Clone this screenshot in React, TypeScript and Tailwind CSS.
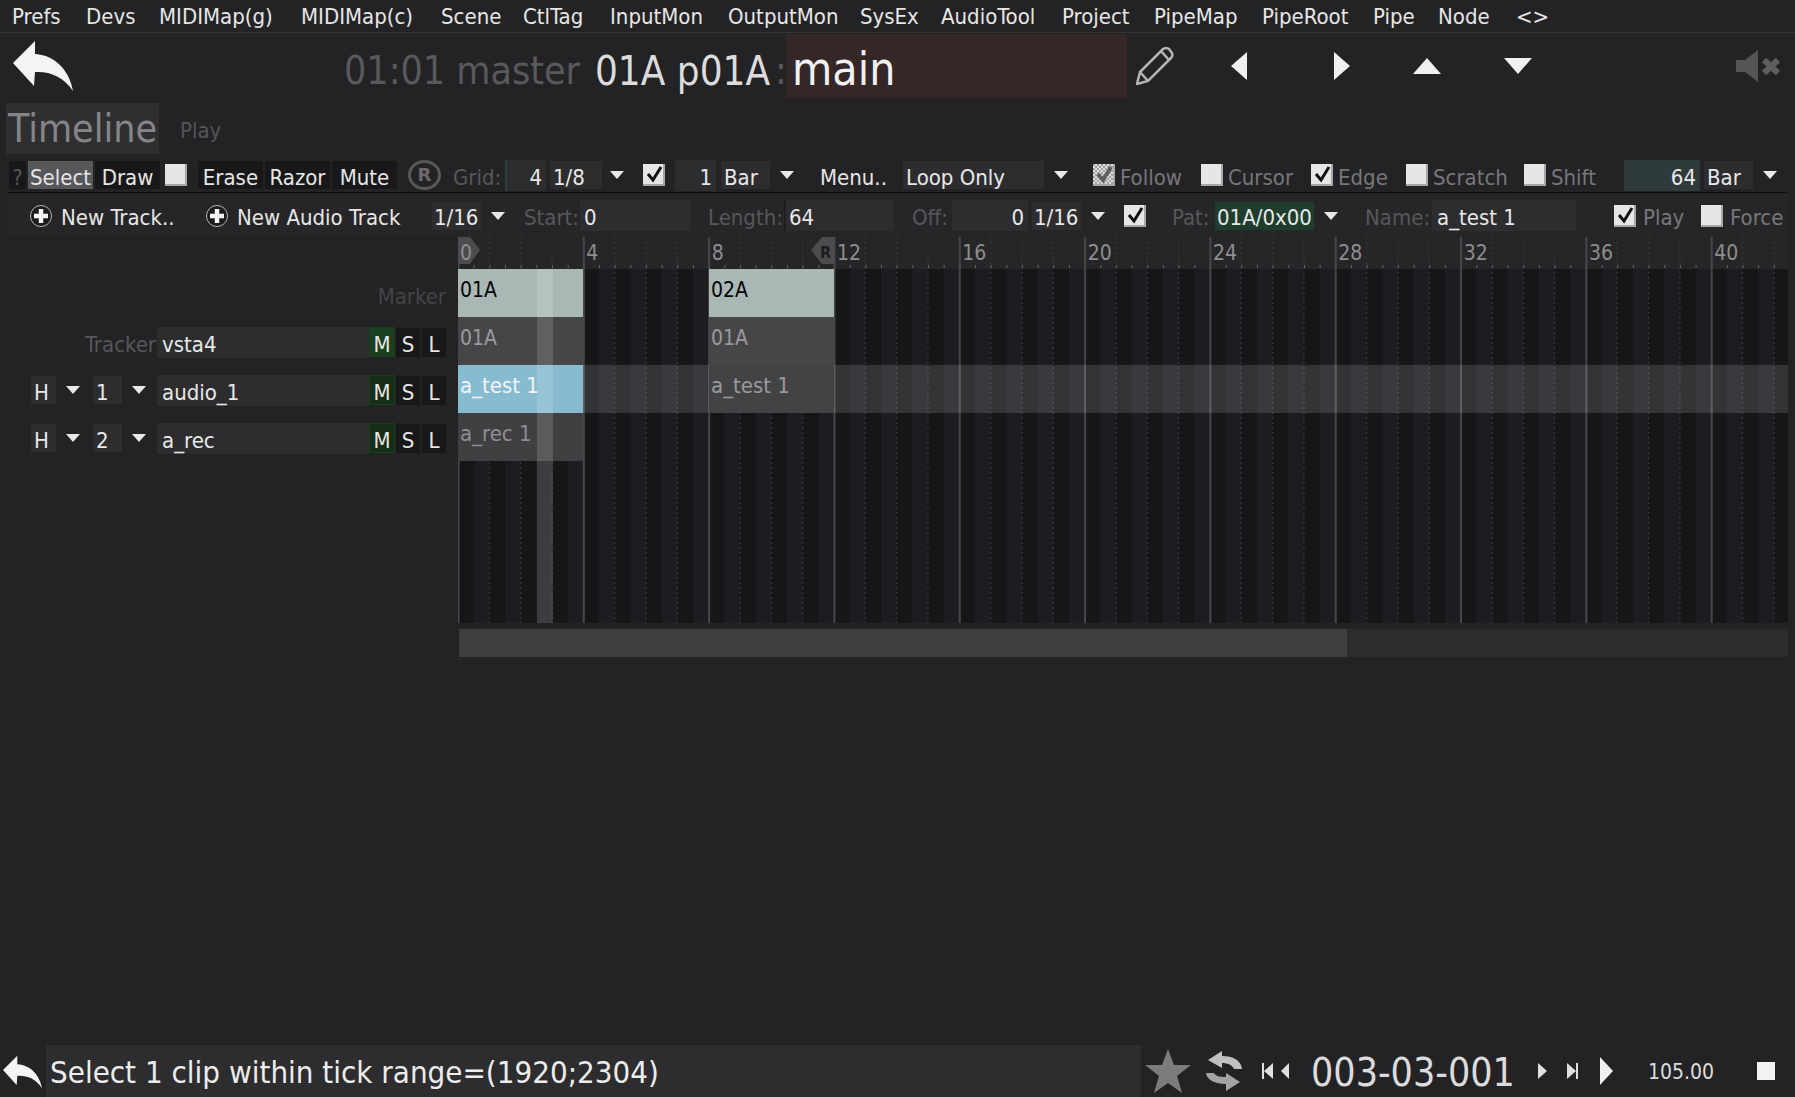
import React from "react";

const menu: [string, string][] = [
  ["Prefs", "w-[74px]"], ["Devs", "w-[73px]"], ["MIDIMap(g)", "w-[142px]"], ["MIDIMap(c)", "w-[140px]"],
  ["Scene", "w-[82px]"], ["CtlTag", "w-[87px]"], ["InputMon", "w-[118px]"], ["OutputMon", "w-[132px]"],
  ["SysEx", "w-[81px]"], ["AudioTool", "w-[121px]"], ["Project", "w-[92px]"], ["PipeMap", "w-[108px]"],
  ["PipeRoot", "w-[111px]"], ["Pipe", "w-[65px]"], ["Node", "w-[78px]"], ["<>", "w-[40px]"],
];

function Down({ className = "" }: { className?: string }) {
  return (
    <svg width="14" height="8" viewBox="0 0 14 8" className={"shrink-0 " + className}>
      <polygon points="0,0 14,0 7,8" fill="#e8e8e8" />
    </svg>
  );
}

function Check({ on, dim, className = "" }: { on?: boolean; dim?: boolean; className?: string }) {
  return (
    <svg width="22" height="22" viewBox="0 0 22 22" className={"shrink-0 " + className}>
      <defs>
        <pattern id="chk" width="4" height="4" patternUnits="userSpaceOnUse">
          <rect width="4" height="4" fill="#dedede" />
          <rect width="2" height="2" fill="#a0a0a0" />
          <rect x="2" y="2" width="2" height="2" fill="#a0a0a0" />
        </pattern>
      </defs>
      <rect x="0" y="0" width="22" height="22" fill={dim ? "url(#chk)" : "#e6e6e6"} />
      <rect x="0" y="20" width="22" height="2" fill="#a8a8a8" />
      <rect x="20" y="0" width="2" height="22" fill="#a8a8a8" />
      {on && <path d="M5 10 L10 16 L18 3" fill="none" stroke={dim ? "#5f5f5f" : "#111"} strokeWidth={dim ? 4 : 3} />}
    </svg>
  );
}

function Plus({ className = "" }: { className?: string }) {
  return (
    <svg width="22" height="22" viewBox="0 0 22 22" className={"shrink-0 " + className}>
      <circle cx="11" cy="11" r="10.5" fill="#1c1c1e" stroke="#b5b5a8" strokeWidth="1" />
      <path d="M11 4 V18 M4 11 H18" stroke="#f4f4f4" strokeWidth="4.5" />
    </svg>
  );
}

function BackArrow({ w, h }: { w: number; h: number }) {
  return (
    <svg width={w} height={h} viewBox="0 0 60 50" className="shrink-0">
      <path d="M22 0 L0 22 L21 45 L22 31 C36 30 50 35 60 50 C57 32 44 14 22 13 Z" fill="#f4f4f4" />
    </svg>
  );
}

function ToolBtn({ label, className = "" }: { label: string; className?: string }) {
  return (
    <div className={"h-[28px] w-[65px] bg-[#18181a] flex items-center justify-center pt-[5px] text-[#e6e6e6] " + className}>{label}</div>
  );
}

function Field({ text, className = "" }: { text: string; className?: string }) {
  return <div className={"bg-[#2d2d2f] flex items-center pt-[5px] text-[#e8e8e8] shrink-0 " + className}>{text}</div>;
}

function Label({ text, className = "" }: { text: string; className?: string }) {
  return <div className={"pt-[5px] text-[#57575a] shrink-0 " + className}>{text}</div>;
}

const BAR = 31.33;
const WIDTH = 1330;
const bars = Array.from({ length: 43 }, (_, i) => i);

function GridDrawing() {
  return (
    <svg width={WIDTH} height={387} viewBox={`0 0 ${WIDTH} 387`} className="absolute left-0 top-0">
      <rect x="0" y="33" width={WIDTH} height="354" fill="#151618" />
      {bars.map((i) => (
        <rect key={"s" + i} x={i * BAR + BAR / 2} y="33" width={BAR / 2} height="354" fill="#1c1d21" />
      ))}
      {bars.map((i) =>
        i % 4 === 0 ? null : (
          <line key={"d" + i} x1={i * BAR} x2={i * BAR} y1="1" y2="387" stroke="#343436" strokeWidth="1.5" strokeDasharray="2 3" />
        )
      )}
      {bars.map((i) => (
        <g key={"t" + i}>
          <rect x={i * BAR + BAR / 2} y="29" width="1" height="3" fill="#666" />
          <rect x={i * BAR} y="29" width="1" height="3" fill="#666" />
        </g>
      ))}
      {bars.map((i) =>
        i % 4 === 0 ? <rect key={"b" + i} x={i * BAR - 0.5} y="1" width="2" height="386" fill="#47474a" /> : null
      )}
    </svg>
  );
}

const ruler = [0, 4, 8, 12, 16, 20, 24, 28, 32, 36, 40];

function Timeline() {
  return (
    <div className="relative ml-[458px] h-[387px] w-[1330px] overflow-hidden bg-[#262628]">
      <GridDrawing />
      {ruler.map((n, i) =>
        i === 0 ? null : (
          <div key={n} className="absolute top-[3px] text-[21px] leading-[28px] text-[#8e8e8e]" style={{ left: i * 125.33 + 3 }}>
            {n}
          </div>
        )
      )}
      <svg width="22" height="27" viewBox="0 0 22 27" className="absolute left-0 top-[1px]">
        <polygon points="0,0 12,0 22,13 12,27 0,27" fill="#4c4c4e" />
      </svg>
      <div className="absolute left-[2px] top-[3px] text-[21px] leading-[28px] text-[#8e8e8e]">0</div>
      <svg width="23" height="27" viewBox="0 0 23 27" className="absolute left-[353px] top-[1px]">
        <polygon points="23,0 11,0 0,13 11,27 23,27" fill="#4c4c4e" />
      </svg>
      <div className="absolute left-[362px] top-[5px] text-[16px] font-bold leading-[24px] text-[#1c1c1e]">R</div>

      <div className="absolute left-0 right-0 top-[129px] h-[48px] bg-white/[0.13]" />

      <Clip x={0} y={33} cls="bg-[#a9b8b5] text-[21px] text-[#050505]" text="01A" />
      <Clip x={251} y={33} cls="bg-[#a9b8b5] text-[21px] text-[#050505]" text="02A" />
      <Clip x={0} y={81} cls="bg-[#464648] text-[21px] text-[#9a9a9c]" text="01A" />
      <Clip x={251} y={81} cls="bg-[#464648] text-[21px] text-[#9a9a9c]" text="01A" />
      <Clip x={0} y={129} cls="bg-[#86bbd0] text-[22px] text-[#f4f4f4]" text="a_test 1" />
      <Clip x={251} y={129} cls="bg-[#434345] text-[22px] text-[#9a9a9c]" text="a_test 1" />
      <Clip x={0} y={177} cls="bg-[#404042] text-[22px] text-[#8e8e90]" text="a_rec 1" />
      <div className="absolute left-[79px] top-[33px] h-[354px] w-[16px] bg-white/[0.14]" />
    </div>
  );
}

function Clip({ x, y, cls, text }: { x: number; y: number; cls: string; text: string }) {
  return (
    <div className={"absolute h-[48px] w-[125px] pl-[2px] pt-[8px] leading-[26px] " + cls} style={{ left: x, top: y }}>
      {text}
    </div>
  );
}

function TrackRow({ h, n, name, label, mBg }: { h?: boolean; n?: string; name: string; label?: string; mBg: string }) {
  return (
    <div className="flex h-[48px] items-center">
      {h ? (
        <>
          <Field text="H" className="ml-[31px] h-[28px] w-[25px] pl-[3px]" />
          <Down className="ml-[10px]" />
          <Field text={n ?? ""} className="ml-[13px] h-[28px] w-[29px] pl-[3px]" />
          <Down className="ml-[10px]" />
        </>
      ) : (
        <div className="w-[157px] pr-[1px] pt-[5px] text-right text-[#57575a]">{label}</div>
      )}
      <Field text={name} className={(h ? "ml-[11px] " : "") + "h-[31px] w-[212px] pl-[5px]"} />
      <div className={"flex h-[30px] w-[26px] items-center justify-center pt-[5px] text-[#e6e6e6] border border-[#1d3d20] " + mBg}>M</div>
      <div className="ml-[1px] flex h-[29px] w-[24px] items-center justify-center bg-[#18181a] pt-[5px] text-[#e6e6e6]">S</div>
      <div className="ml-[2px] flex h-[29px] w-[24px] items-center justify-center bg-[#18181a] pt-[5px] text-[#e6e6e6]">L</div>
    </div>
  );
}

export default function App() {
  return (
    <div className="flex h-[1097px] w-[1795px] flex-col overflow-hidden bg-[#232325] font-['DejaVu_Sans_Condensed','DejaVu_Sans',sans-serif] text-[22px] leading-none text-[#e6e6e6]">
      <div className="flex h-[33px] shrink-0 items-center border-b border-[#343436] pl-[12px] pt-[2px]">
        {menu.map(([m, c]) => (
          <div key={m} className={"shrink-0 " + c}>{m}</div>
        ))}
      </div>

      <div className="flex h-[70px] shrink-0 items-start">
        <div className="ml-[13px] mt-[8px]"><BackArrow w={60} h={50} /></div>
        <div className="ml-[271px] mt-[1px] flex h-[64px] w-[442px] shrink-0 items-center pt-[9px] text-[39px] text-[#59595b]">
          <span className="shrink-0">01:01 master</span>
          <span className="ml-[15px] shrink-0 text-[40px] text-[#dcdcdc]">01A p01A</span>
          <span className="ml-[5px] shrink-0">:</span>
        </div>
        <div className="mt-[1px] flex h-[64px] w-[341px] shrink-0 items-center bg-[#352728] pl-[6px] pt-[5px] text-[46px] text-[#f0f0f0]">main</div>
        <svg width="38" height="38" viewBox="0 0 38 38" className="ml-[9px] mt-[14px] shrink-0">
          <path d="M1 37 L4 25 L27 2 Q30 0 33 2 L36 6 Q37 9 35 11 L12 34 Z M4 25 L12 34 M25 4 L33 13" fill="none" stroke="#b4b4b4" strokeWidth="2.5" />
        </svg>
        <svg width="16" height="28" viewBox="0 0 16 28" className="ml-[57px] mt-[19px] shrink-0"><polygon points="16,0 16,28 0,14" fill="#f0f0f0" /></svg>
        <svg width="16" height="28" viewBox="0 0 16 28" className="ml-[87px] mt-[19px] shrink-0"><polygon points="0,0 0,28 16,14" fill="#f0f0f0" /></svg>
        <svg width="28" height="16" viewBox="0 0 28 16" className="ml-[63px] mt-[25px] shrink-0"><polygon points="0,16 28,16 14,0" fill="#f0f0f0" /></svg>
        <svg width="28" height="16" viewBox="0 0 28 16" className="ml-[63px] mt-[25px] shrink-0"><polygon points="0,0 28,0 14,16" fill="#f0f0f0" /></svg>
        <svg width="44" height="32" viewBox="0 0 44 32" className="ml-[204px] mt-[17px] shrink-0">
          <path d="M0 10 H9 L22 0 V32 L9 22 H0 Z" fill="#555557" />
          <path d="M28 10 L42 23 M42 10 L28 23" stroke="#5f5f61" strokeWidth="6" />
        </svg>
      </div>

      <div className="flex h-[58px] shrink-0 items-start">
        <div className="ml-[6px] flex h-[51px] w-[153px] items-center justify-center bg-[#2f2f31] text-[39px] text-[#858587]">Timeline</div>
        <div className="ml-[21px] mt-[17px] text-[#545456]">Play</div>
      </div>

      <div className="flex h-[31px] shrink-0 items-center pb-[3px]">
        <div className="ml-[9px] flex h-[28px] w-[17px] items-center justify-center bg-[#18181a] pt-[5px] text-[#555]">?</div>
        <ToolBtn label="Select" className="ml-[2px] !bg-[#57575a]" />
        <ToolBtn label="Draw" className="ml-[2px]" />
        <Check className="ml-[5px]" />
        <ToolBtn label="Erase" className="ml-[11px]" />
        <ToolBtn label="Razor" className="ml-[2px]" />
        <ToolBtn label="Mute" className="ml-[2px]" />
        <svg width="33" height="30" viewBox="0 0 33 30" className="ml-[11px] shrink-0">
          <ellipse cx="16.5" cy="15" rx="15" ry="13.5" fill="none" stroke="#58585a" strokeWidth="3" />
          <text x="16.5" y="21" textAnchor="middle" fontSize="18" fontWeight="bold" fill="#6a6a6c" fontFamily="'DejaVu Sans',sans-serif">R</text>
        </svg>
        <Label text="Grid:" className="ml-[12px] w-[52px]" />
        <Field text="4" className="h-[31px] w-[41px] justify-end border-l-2 border-[#2f3d3d] pr-[4px]" />
        <Field text="1/8" className="ml-[4px] h-[28px] w-[52px] pl-[3px]" />
        <Down className="ml-[8px]" />
        <Check on className="ml-[19px]" />
        <Field text="1" className="ml-[10px] h-[31px] w-[41px] justify-end pr-[4px]" />
        <Field text="Bar" className="ml-[5px] h-[28px] w-[49px] pl-[3px]" />
        <Down className="ml-[10px]" />
        <div className="ml-[26px] w-[83px] shrink-0 pt-[5px]">Menu..</div>
        <Field text="Loop Only" className="h-[28px] w-[141px] pl-[3px]" />
        <Down className="ml-[10px]" />
        <Check on dim className="ml-[25px]" />
        <Label text="Follow" className="ml-[5px] w-[81px] !text-[#77777a]" />
        <Check />
        <Label text="Cursor" className="ml-[5px] w-[83px] !text-[#77777a]" />
        <Check on />
        <Label text="Edge" className="ml-[5px] w-[68px] !text-[#77777a]" />
        <Check />
        <Label text="Scratch" className="ml-[5px] w-[91px] !text-[#77777a]" />
        <Check />
        <Label text="Shift" className="ml-[5px] w-[73px] !text-[#77777a]" />
        <Field text="64" className="h-[31px] w-[76px] justify-end !bg-[#2f3a3c] pr-[4px]" />
        <Field text="Bar" className="ml-[4px] h-[28px] w-[49px] pl-[3px]" />
        <Down className="ml-[10px]" />
      </div>

      <div className="ml-[8px] flex h-[44px] w-[1779px] shrink-0 items-start border-t border-[#0c0c0c] bg-[#262628] pt-[7px]">
        <div className="flex h-[31px] items-center">
          <Plus className="ml-[22px]" />
          <div className="ml-[9px] w-[145px] shrink-0 pt-[5px]">New Track..</div>
          <Plus />
          <div className="ml-[9px] w-[187px] shrink-0 pt-[5px]">New Audio Track</div>
          <Field text="1/16" className="ml-[8px] h-[28px] w-[49px] pl-[2px]" />
          <Down className="ml-[10px]" />
          <Label text="Start:" className="ml-[19px] w-[56px]" />
          <Field text="0" className="h-[31px] w-[110px] pl-[4px]" />
          <Label text="Length:" className="ml-[18px] w-[76px]" />
          <Field text="64" className="h-[31px] w-[110px] border-l-2 border-[#1e1e20] pl-[3px]" />
          <Label text="Off:" className="ml-[18px] w-[40px]" />
          <Field text="0" className="h-[31px] w-[76px] justify-end pr-[4px]" />
          <Field text="1/16" className="ml-[4px] h-[28px] w-[49px] pl-[2px]" />
          <Down className="ml-[10px]" />
          <Check on className="ml-[19px]" />
          <Label text="Pat:" className="ml-[26px] w-[43px]" />
          <Field text="01A/0x00" className="h-[28px] w-[99px] !bg-[#1f3d2c] pl-[2px]" />
          <Down className="ml-[10px]" />
          <Label text="Name:" className="ml-[27px] w-[67px]" />
          <Field text="a_test 1" className="h-[31px] w-[144px] pl-[5px]" />
          <Check on className="ml-[38px]" />
          <Label text="Play" className="ml-[7px] w-[58px] !text-[#77777a]" />
          <Check />
          <Label text="Force" className="ml-[7px] !text-[#77777a]" />
        </div>
      </div>

      <div className="relative h-[387px] shrink-0">
        <div className="absolute left-0 top-[34px] w-[446px]">
          <div className="flex h-[48px] items-center justify-end pt-[5px] text-[#444446]">Marker</div>
          <TrackRow name="vsta4" label="Tracker" mBg="bg-[#1b4020]" />
          <TrackRow h n="1" name="audio_1" mBg="bg-[#162e18]" />
          <TrackRow h n="2" name="a_rec" mBg="bg-[#162e18]" />
        </div>
        <Timeline />
      </div>

      <div className="ml-[459px] mt-[6px] flex h-[28px] w-[1329px] shrink-0 bg-[#2c2c2d]">
        <div className="h-full w-[888px] bg-[#3f3f40]" />
      </div>

      <div className="flex-1" />

      <div className="flex h-[52px] shrink-0 items-center">
        <div className="ml-[3px] mt-[2px]"><BackArrow w={39} h={36} /></div>
        <div className="ml-[4px] flex h-[52px] w-[1095px] shrink-0 items-center bg-[#2d2d2f] pl-[4px] pt-[3px] text-[31px] text-[#ececec]">
          Select 1 clip within tick range=(1920;2304)
        </div>
        <svg width="48" height="46" viewBox="0 0 48 46" className="ml-[3px] shrink-0">
          <polygon points="24,1 30,17 47,17 33,28 38,45 24,35 10,45 15,28 1,17 18,17" fill="#7c7c7c" />
        </svg>
        <svg width="38" height="44" viewBox="0 0 38 44" className="ml-[13px] shrink-0">
          <path d="M3 11 L17 2 V7 C28 7 36 11 37 20 H29 C27 16 23 14 17 14 V19 Z" fill="#c0c0c0" />
          <path d="M35 33 L21 24 V28 C14 28 11 27 9 24 H1 C2 31 10 35 21 35 V42 Z" fill="#a4a4a4" />
        </svg>
        <svg width="28" height="16" viewBox="0 0 28 16" className="ml-[19px] shrink-0">
          <rect x="0" y="0" width="2" height="16" fill="#e0e0e0" />
          <polygon points="11,0 11,16 2,8" fill="#e0e0e0" />
          <polygon points="27,0 27,16 19,8" fill="#e0e0e0" />
        </svg>
        <div className="ml-[21px] w-[205px] shrink-0 whitespace-nowrap pt-[3px] text-[39px] text-[#dcdcdc]">003-03-001</div>
        <svg width="9" height="16" viewBox="0 0 9 16" className="ml-[22px] shrink-0"><polygon points="0,0 0,16 9,8" fill="#e0e0e0" /></svg>
        <svg width="11" height="16" viewBox="0 0 11 16" className="ml-[20px] shrink-0">
          <polygon points="0,0 0,16 9,8" fill="#e0e0e0" /><rect x="9" y="0" width="2" height="16" fill="#e0e0e0" />
        </svg>
        <svg width="13" height="28" viewBox="0 0 13 28" className="ml-[22px] shrink-0"><polygon points="0,0 0,28 13,14" fill="#f0f0f0" /></svg>
        <div className="ml-[35px] w-[67px] shrink-0 pt-[3px] text-[21px] text-[#dcdcdc]">105.00</div>
        <div className="ml-[42px] h-[18px] w-[18px] shrink-0 bg-[#f2f2f2]" />
      </div>
    </div>
  );
}
